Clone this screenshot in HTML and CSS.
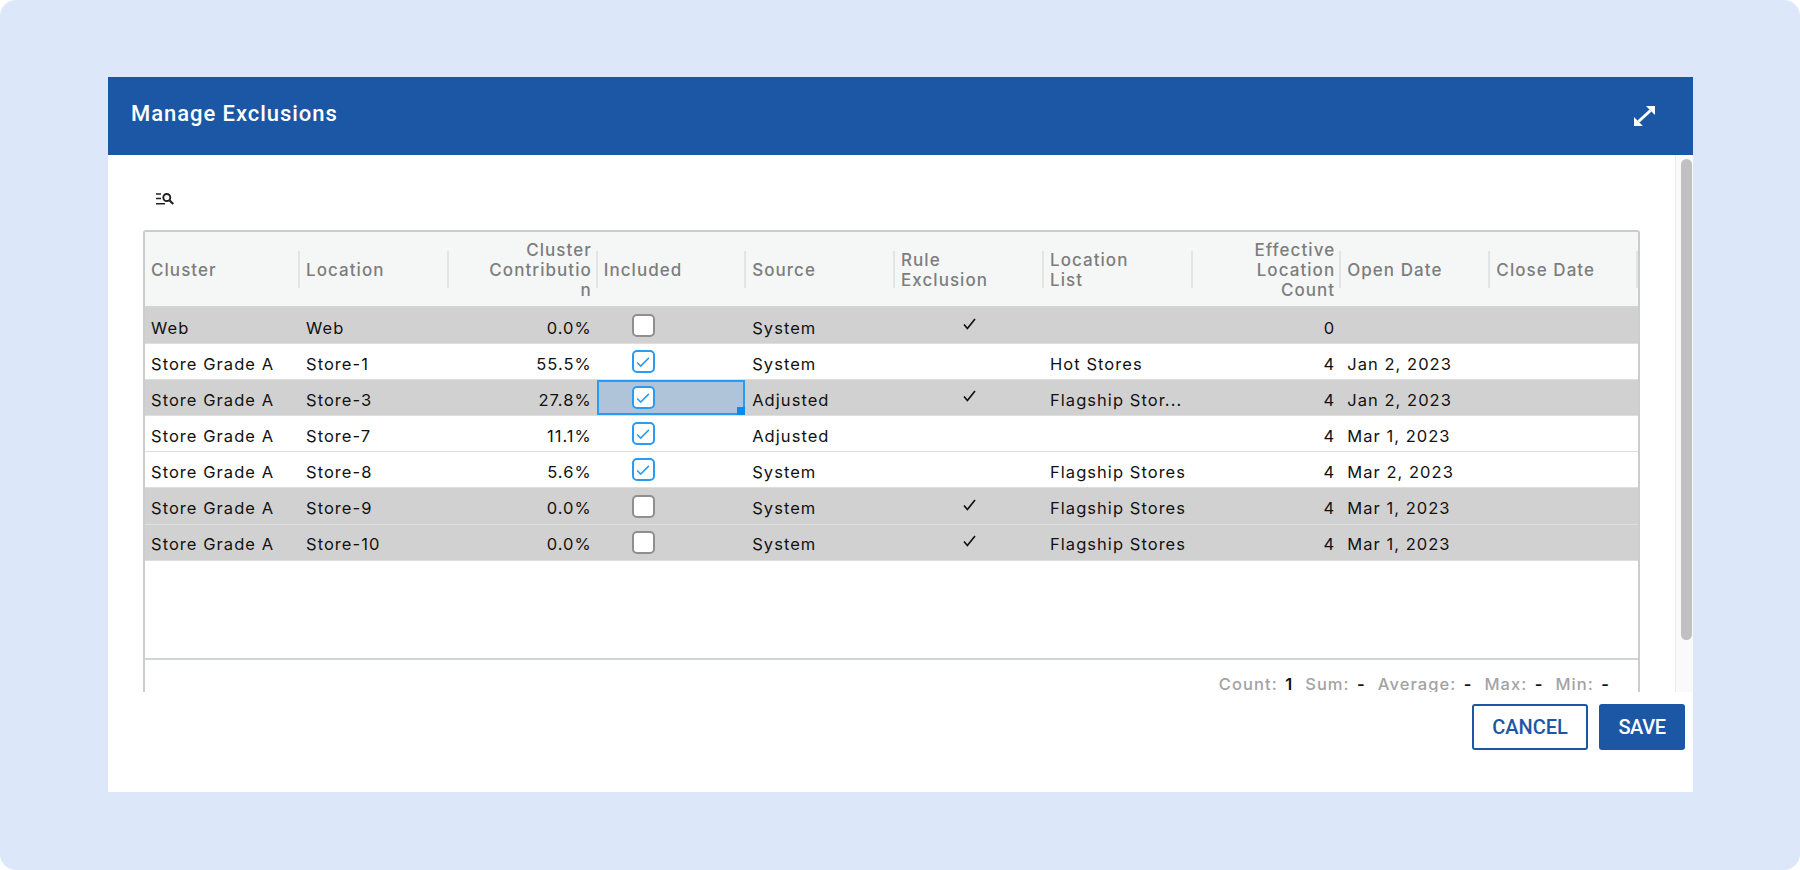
FILE: index.html
```html
<!DOCTYPE html>
<html lang="en">
<head>
<meta charset="utf-8">
<title>Manage Exclusions</title>
<link rel="stylesheet" href="styles.css">
</head>
<body>
<div class="page">
  <section class="dialog">
    <header class="dialog-head">
      <h1 class="dialog-title">Manage Exclusions</h1>
      <svg class="expand" viewBox="0 0 21 20" width="21" height="20"><path d="M12 0h9v9z M0 11l9 9H0z" fill="#fff"/><path d="M16.5 4.5L4.5 15.5" stroke="#fff" stroke-width="3" fill="none"/></svg>
    </header>
    <div class="dialog-body">
      <div class="content">
        <div class="toolbar">
          <svg class="find" viewBox="0 0 18 12" width="18" height="12"><path d="M0 1h5M0 5.6h5M0 10.7h9" stroke="#222" stroke-width="1.5" fill="none"/><circle cx="10.8" cy="4.5" r="3.5" stroke="#222" stroke-width="1.9" fill="none"/><path d="M13.4 7.2l3.8 3.8" stroke="#222" stroke-width="2.2" fill="none"/></svg>
        </div>
        <div class="grid">
          <div class="row head">
            <div class="hc">Cluster</div>
            <div class="hc">Location</div>
            <div class="hc num">Cluster<br>Contributio<br>n</div>
            <div class="hc">Included</div>
            <div class="hc">Source</div>
            <div class="hc">Rule<br>Exclusion</div>
            <div class="hc">Location<br>List</div>
            <div class="hc num">Effective<br>Location<br>Count</div>
            <div class="hc">Open Date</div>
            <div class="hc">Close Date</div>
          </div>

          <div class="row off">
            <div class="c">Web</div><div class="c">Web</div><div class="c num">0.0%</div>
            <div class="c chk"><span class="cb"></span></div>
            <div class="c">System</div>
            <div class="c box"><svg class="tick" viewBox="0 0 13 12" width="13" height="12"><path d="M1 6.5l3.4 4L12 1" /></svg></div>
            <div class="c"></div><div class="c num">0</div><div class="c"></div><div class="c"></div>
          </div>
          <div class="row">
            <div class="c">Store Grade A</div><div class="c">Store-1</div><div class="c num">55.5%</div>
            <div class="c chk"><span class="cb on"><svg viewBox="0 0 15 11" width="14" height="10"><path d="M1 6l4 4 9-9"/></svg></span></div>
            <div class="c">System</div>
            <div class="c box"></div>
            <div class="c">Hot Stores</div><div class="c num">4</div><div class="c">Jan 2, 2023</div><div class="c"></div>
          </div>
          <div class="row off">
            <div class="c">Store Grade A</div><div class="c">Store-3</div><div class="c num">27.8%</div>
            <div class="c chk sel"><span class="cb on"><svg viewBox="0 0 15 11" width="14" height="10"><path d="M1 6l4 4 9-9"/></svg></span><span class="handle"></span></div>
            <div class="c">Adjusted</div>
            <div class="c box"><svg class="tick" viewBox="0 0 13 12" width="13" height="12"><path d="M1 6.5l3.4 4L12 1" /></svg></div>
            <div class="c">Flagship Stor...</div><div class="c num">4</div><div class="c">Jan 2, 2023</div><div class="c"></div>
          </div>
          <div class="row">
            <div class="c">Store Grade A</div><div class="c">Store-7</div><div class="c num">11.1%</div>
            <div class="c chk"><span class="cb on"><svg viewBox="0 0 15 11" width="14" height="10"><path d="M1 6l4 4 9-9"/></svg></span></div>
            <div class="c">Adjusted</div>
            <div class="c box"></div>
            <div class="c"></div><div class="c num">4</div><div class="c">Mar 1, 2023</div><div class="c"></div>
          </div>
          <div class="row">
            <div class="c">Store Grade A</div><div class="c">Store-8</div><div class="c num">5.6%</div>
            <div class="c chk"><span class="cb on"><svg viewBox="0 0 15 11" width="14" height="10"><path d="M1 6l4 4 9-9"/></svg></span></div>
            <div class="c">System</div>
            <div class="c box"></div>
            <div class="c">Flagship Stores</div><div class="c num">4</div><div class="c">Mar 2, 2023</div><div class="c"></div>
          </div>
          <div class="row off">
            <div class="c">Store Grade A</div><div class="c">Store-9</div><div class="c num">0.0%</div>
            <div class="c chk"><span class="cb"></span></div>
            <div class="c">System</div>
            <div class="c box"><svg class="tick" viewBox="0 0 13 12" width="13" height="12"><path d="M1 6.5l3.4 4L12 1" /></svg></div>
            <div class="c">Flagship Stores</div><div class="c num">4</div><div class="c">Mar 1, 2023</div><div class="c"></div>
          </div>
          <div class="row off">
            <div class="c">Store Grade A</div><div class="c">Store-10</div><div class="c num">0.0%</div>
            <div class="c chk"><span class="cb"></span></div>
            <div class="c">System</div>
            <div class="c box"><svg class="tick" viewBox="0 0 13 12" width="13" height="12"><path d="M1 6.5l3.4 4L12 1" /></svg></div>
            <div class="c">Flagship Stores</div><div class="c num">4</div><div class="c">Mar 1, 2023</div><div class="c"></div>
          </div>

          <div class="empty"></div>
          <div class="status">
            <span class="stat">Count: <b>1</b></span>
            <span class="stat">Sum: <b>-</b></span>
            <span class="stat">Average: <b>-</b></span>
            <span class="stat">Max: <b>-</b></span>
            <span class="stat">Min: <b>-</b></span>
          </div>
        </div>
      </div>
      <div class="track"><div class="thumb"></div></div>
    </div>
    <footer class="dialog-foot">
      <button class="btn ghost">CANCEL</button>
      <button class="btn solid">SAVE</button>
    </footer>
  </section>
</div>
</body>
</html>
```

FILE: styles.css
```css
* { box-sizing: border-box; }
html, body { margin: 0; height: 100%; background: #fff; }
body { overflow: hidden; font-family: Inter, "Liberation Sans", sans-serif; }

.page {
  height: 870px;
  background: #dce8f9;
  border-radius: 16px;
  padding: 77px 107px 78px 108px;
}

.dialog {
  height: 715px;
  background: #fff;
  display: flex;
  flex-direction: column;
}

.dialog-head {
  height: 78px;
  flex: none;
  background: #1b57a5;
  display: flex;
  align-items: center;
  justify-content: space-between;
  padding: 0 38px 0 23px;
}
.dialog-title {
  margin: 0 0 4px;
  color: #fff;
  font: 500 22px/1 Roboto, sans-serif;
  letter-spacing: 0.95px;
}
.expand { display: block; }

.dialog-body {
  height: 537px;
  flex: none;
  display: flex;
  overflow: hidden;
}
.content {
  flex: 1;
  min-width: 0;
  padding-left: 35px;
}
.toolbar {
  height: 75px;
  padding: 38px 0 0 13px;
}
.find { display: block; }

.grid {
  width: 1497px;
  border: 2px solid #c9cdce;
  border-radius: 3px 3px 0 0;
  background: #fff;
  font-size: 16.5px;
  letter-spacing: 1.05px;
  color: #111;
}
.row {
  display: grid;
  grid-template-columns: 155px 149px 148.8px 148.4px 148.8px 149px 149px 148.2px 149.2px 147.6px;
  height: 36.1px;
  border-bottom: 1px solid #dcdfdf;
}
.row.off { background: #d1d1d1; }
.row.head {
  height: 76px;
  background: #f5f7f7;
  border-bottom: 2px solid #d0d4d5;
  align-items: center;
  color: #7d7d7d;
  font-size: 17px;
  font-weight: 500;
  line-height: 20.3px;
}
.hc {
  height: 37px;
  border-right: 2px solid #e2e5e5;
  padding: 2px 4px 0 6px;
  display: flex;
  flex-direction: column;
  justify-content: center;
  white-space: nowrap;
}
.hc.num { align-items: flex-end; text-align: right; }

.c {
  display: flex;
  align-items: center;
  padding: 4px 6px 0 6px;
  white-space: nowrap;
  overflow: hidden;
  min-width: 0;
}
.c.num { justify-content: flex-end; }
.c.box { justify-content: center; padding: 0; }
.c.chk { padding: 0 0 0 34px; }
.c.sel {
  position: relative;
  overflow: visible;
  margin: 0 1px 0 -1px;
  padding-left: 33px;
  background: #b0c4d9;
  border: 2px solid #2a9bf0;
}
.handle {
  position: absolute;
  right: -2px;
  bottom: -2px;
  width: 8px;
  height: 8px;
  background: #0b8bf2;
}

.cb {
  width: 23px;
  height: 23px;
  background: #fff;
  border: 2px solid #8f8f8f;
  border-radius: 5px;
  display: flex;
  align-items: center;
  justify-content: center;
}
.cb.on { border-color: #2a9bf0; }
.cb svg { display: block; }
.cb path {
  fill: none;
  stroke: #2a9bf0;
  stroke-width: 1.7;
}
.tick { display: block; margin-top: -3px; }
.tick path {
  fill: none;
  stroke: #111;
  stroke-width: 1.7;
}

.empty { height: 97.7px; }
.status {
  height: 60px;
  border-top: 2px solid #d0d4d5;
  display: flex;
  justify-content: flex-end;
  gap: 12px;
  padding: 14px 28px 0 0;
  color: #a3a3a3;
  font-weight: 500;
  line-height: 20px;
}
.stat b { color: #111; font-weight: 600; margin-left: 2px; }

.track {
  width: 18px;
  flex: none;
  background: #fafafa;
  border-left: 1px solid #ececec;
  padding: 4px 1px 0 5px;
}
.thumb {
  height: 481px;
  background: #c1c1c1;
  border-radius: 6px;
}

.dialog-foot {
  flex: 1;
  display: flex;
  justify-content: flex-end;
  align-items: flex-start;
  gap: 11px;
  padding: 12px 8px 0 0;
}
.btn {
  height: 46px;
  border-radius: 3px;
  font: 500 20px/1 Roboto, sans-serif;
  padding: 0;
}
.btn.ghost {
  width: 116px;
  background: #fff;
  color: #1b57a5;
  border: 2px solid #1b57a5;
}
.btn.solid {
  width: 86px;
  background: #1b57a5;
  color: #fff;
  border: 0;
  letter-spacing: -0.4px;
}
```
